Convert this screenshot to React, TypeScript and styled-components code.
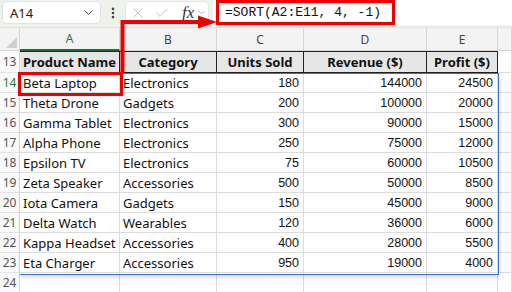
import { Fragment } from "react";
import styled, { createGlobalStyle } from "styled-components";
import { ChevronDown, EllipsisVertical, X, Check } from "lucide-react";

const GlobalStyle = createGlobalStyle`
    body {
        margin: 0;
        background: #ffffff;
    }
`

const Page = styled.div`
    position: relative;
    width: 512px;
    height: 292px;
    overflow: hidden;
    font-family: "Noto Sans", "Liberation Sans", sans-serif;
    background: #ffffff;
`

const Toolbar = styled.div`
    display: flex;
    align-items: flex-start;
    height: 28px;
    box-sizing: border-box;
    padding: 1px 0 0 2px;
    background: #eef2ea;
    border-bottom: 1px solid #dfe3db;
`

const NameBox = styled.div`
    display: flex;
    align-items: center;
    justify-content: space-between;
    width: 99px;
    height: 23px;
    box-sizing: border-box;
    padding: 0 4px 0 7px;
    background: #ffffff;
    border: 1px solid #e2e2e2;
    border-radius: 5px;
    font-size: 13px;
    color: #222;
`

const Dots = styled.div`
    display: flex;
    align-items: center;
    justify-content: center;
    width: 24px;
    height: 23px;
    color: #444;
`

const IconGroup = styled.div`
    display: flex;
    align-items: center;
    gap: 8px;
    width: 84px;
    height: 23px;
    box-sizing: border-box;
    padding: 0 2px 0 4px;
    background: #ffffff;
    border: 1px solid #e6e6e6;
    border-radius: 5px;
    color: #b8b8b8;
    flex-shrink: 0;

    svg {
        flex-shrink: 0;
    }
`

const Fx = styled.span`
    font-family: "Liberation Serif", serif;
    font-style: italic;
    font-size: 17px;
    line-height: 1;
    color: #333;
    margin-left: 4px;
    margin-right: -6px;
`

const FormulaBar = styled.div`
    flex: 1;
    display: flex;
    align-items: center;
    height: 25px;
    margin-top: -1px;
    margin-left: 4px;
    background: #ffffff;
`

const FormulaText = styled.span`
    display: flex;
    align-items: center;
    width: 179px;
    height: 25px;
    box-sizing: border-box;
    margin-left: 3px;
    padding-left: 6px;
    border: 3px solid #ee0000;
    font-family: "Liberation Mono", monospace;
    font-size: 13px;
    color: #111;
`

const Sheet = styled.div`
    display: grid;
    grid-template-columns: 20px 100px 97px 87px 123px 71px 1fr;
    grid-template-rows: 23px 22px repeat(11, 20px);
`

const Corner = styled.div`
    position: relative;
    background: #f3f3f3;
    border-right: 1px solid #d6d6d6;
    border-bottom: 1px solid #d6d6d6;
    &::after {
        content: "";
        position: absolute;
        right: 2px;
        bottom: 2px;
        border-left: 11px solid transparent;
        border-bottom: 11px solid #d0d0d0;
    }
`

const ColHead = styled.div<{ $active?: boolean }>`
    display: flex;
    align-items: center;
    justify-content: center;
    background: #f3f3f3;
    border-right: 1px solid #d6d6d6;
    border-bottom: ${p => p.$active ? "2px solid #1f6b3e" : "1px solid #d6d6d6"};
    font-size: 12px;
    color: ${p => p.$active ? "#1f7a45" : "#444"};
`

const RowHead = styled.div<{ $active?: boolean }>`
    display: flex;
    align-items: center;
    justify-content: center;
    background: #fafafa;
    border-right: 1px solid #d6d6d6;
    border-bottom: 1px solid #e3e3e3;
    font-size: 12px;
    color: ${p => p.$active ? "#1f7a45" : "#555"};
`

const HeadCell = styled.div`
    display: flex;
    align-items: center;
    justify-content: center;
    background: #e7e6e6;
    border-top: 1px solid #222;
    border-right: 1px solid #222;
    border-bottom: 1px solid #222;
    font-size: 13px;
    font-weight: 700;
    color: #111;
    white-space: nowrap;
`

const Cell = styled.div<{ $num?: boolean }>`
    display: flex;
    align-items: center;
    justify-content: ${p => p.$num ? "flex-end" : "flex-start"};
    padding: ${p => p.$num ? "1px 4px 0 0" : "1px 0 0 3px"};
    border-right: 1px solid #dcdcdc;
    border-bottom: 1px solid #dcdcdc;
    font-family: ${p => p.$num ? '"Liberation Sans", sans-serif' : '"Noto Sans", sans-serif'};
    font-size: ${p => p.$num ? "12.5px" : "13px"};
    color: #111;
    white-space: nowrap;
    overflow: hidden;
`

const Blank = styled.div`
    border-right: 1px solid #dcdcdc;
    border-bottom: 1px solid #dcdcdc;
`

const SpillRange = styled.div`
    position: absolute;
    left: 20px;
    top: 73px;
    width: 479px;
    height: 202px;
    box-sizing: border-box;
    border: 1.5px solid #3d6fc6;
    border-left: none;
    box-shadow: 1px 3px 4px rgba(0, 0, 0, 0.12);
    pointer-events: none;
`

const Annotation = styled.svg`
    position: absolute;
    left: 0;
    top: 0;
    pointer-events: none;
`

const headers = ["Product Name", "Category", "Units Sold", "Revenue ($)", "Profit ($)"]

const rows: [string, string, number, number, number][] = [
    ["Beta Laptop", "Electronics", 180, 144000, 24500],
    ["Theta Drone", "Gadgets", 200, 100000, 20000],
    ["Gamma Tablet", "Electronics", 300, 90000, 15000],
    ["Alpha Phone", "Electronics", 250, 75000, 12000],
    ["Epsilon TV", "Electronics", 75, 60000, 10500],
    ["Zeta Speaker", "Accessories", 500, 50000, 8500],
    ["Iota Camera", "Gadgets", 150, 45000, 9000],
    ["Delta Watch", "Wearables", 120, 36000, 6000],
    ["Kappa Headset", "Accessories", 400, 28000, 5500],
    ["Eta Charger", "Accessories", 950, 19000, 4000],
]

export default function App() {
    return (
        <Page>
            <GlobalStyle />
            <Toolbar>
                <NameBox>
                    A14
                    <ChevronDown size={15} strokeWidth={1.5} color="#333" />
                </NameBox>
                <Dots><EllipsisVertical size={14} strokeWidth={2.5} /></Dots>
                <IconGroup>
                    <X size={16} strokeWidth={1.3} />
                    <Check size={16} strokeWidth={1.3} />
                    <Fx>fx</Fx>
                    <ChevronDown size={11} strokeWidth={1.5} color="#999" />
                </IconGroup>
                <FormulaBar>
                    <FormulaText>=SORT(A2:E11, 4, -1)</FormulaText>
                </FormulaBar>
            </Toolbar>
            <Sheet>
                <Corner />
                {["A", "B", "C", "D", "E", ""].map((c, i) => (
                    <ColHead key={i} $active={c === "A"}>{c}</ColHead>
                ))}
                <RowHead>13</RowHead>
                {headers.map(h => <HeadCell key={h}>{h}</HeadCell>)}
                <Blank />
                {rows.map((r, i) => (
                    <Fragment key={i}>
                        <RowHead $active={i === 0}>{14 + i}</RowHead>
                        <Cell>{r[0]}</Cell>
                        <Cell>{r[1]}</Cell>
                        <Cell $num>{r[2]}</Cell>
                        <Cell $num>{r[3]}</Cell>
                        <Cell $num>{r[4]}</Cell>
                        <Blank />
                    </Fragment>
                ))}
                <RowHead>24</RowHead>
                {[0, 1, 2, 3, 4, 5].map(i => <Blank key={i} />)}
            </Sheet>
            <SpillRange />
            <Annotation width="512" height="292">
                <rect x="19.5" y="73.5" width="102" height="21" fill="none" stroke="#ee0000" strokeWidth="3" />
                <polyline points="122.5,73 122.5,22 200,22" fill="none" stroke="#ee0000" strokeWidth="4" />
                <polygon points="198,15.5 217,22 198,28.5" fill="#ee0000" />
            </Annotation>
        </Page>
    )
}
